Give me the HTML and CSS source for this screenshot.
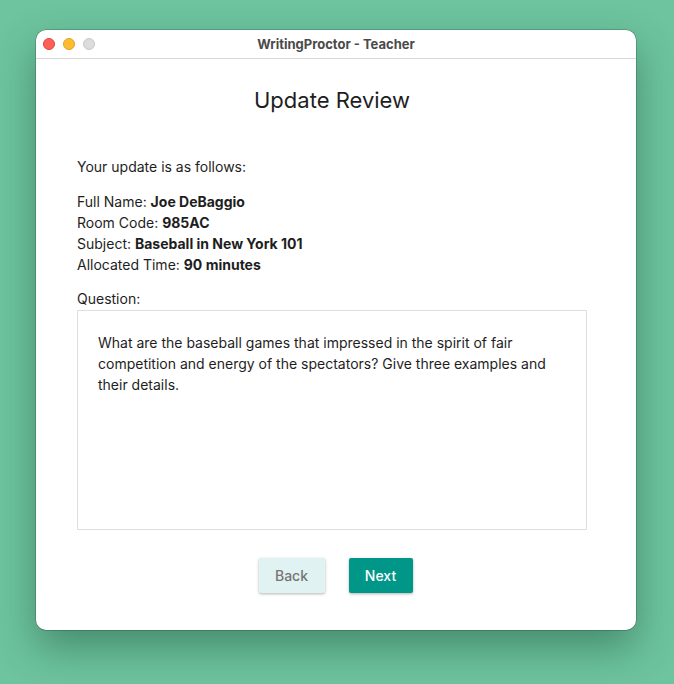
FILE: index.html
```html
<!DOCTYPE html>
<html>
<head>
<meta charset="utf-8">
<link rel="stylesheet" href="styles.css">
</head>
<body>
<div class="desktop">
  <div class="window">
    <div class="titlebar">
      <div class="lights">
        <span class="light red"></span>
        <span class="light yellow"></span>
        <span class="light gray"></span>
      </div>
      <div class="title">WritingProctor - Teacher</div>
    </div>
    <div class="content">
      <h1 class="heading">Update Review</h1>
      <p class="intro">Your update is as follows:</p>
      <div class="details">
        <div>Full Name: <b>Joe DeBaggio</b></div>
        <div>Room Code: <b>985AC</b></div>
        <div>Subject: <b>Baseball in New York 101</b></div>
        <div>Allocated Time: <b>90 minutes</b></div>
      </div>
      <div class="qlabel">Question:</div>
      <div class="qbox">What are the baseball games that impressed in the spirit of fair competition and energy of the spectators? Give three examples and their details.</div>
      <div class="actions">
        <button class="btn back">Back</button>
        <button class="btn next">Next</button>
      </div>
    </div>
  </div>
</div>
</body>
</html>
```
FILE: styles.css
```css
html, body {
  margin: 0;
  padding: 0;
}
body {
  width: 674px;
  height: 684px;
  background: #6ec49f;
  font-family: Inter, "Noto Sans", sans-serif;
  overflow: hidden;
}
.desktop {
  padding: 30px 38px 0 36px;
}
.window {
  width: 600px;
  height: 600px;
  background: #fff;
  border-radius: 10px;
  box-shadow: 0 0 0 0.5px rgba(0,0,0,0.35), 0 18px 40px rgba(20,70,50,0.45);
  overflow: hidden;
  display: flex;
  flex-direction: column;
}
.titlebar {
  height: 28px;
  border-bottom: 1px solid #d9d9d9;
  position: relative;
  display: flex;
  align-items: center;
  justify-content: center;
  flex-shrink: 0;
}
.lights {
  position: absolute;
  left: 7px;
  top: 8px;
  display: flex;
  gap: 8px;
}
.light {
  width: 12px;
  height: 12px;
  border-radius: 50%;
  box-sizing: border-box;
}
.red { background: #fe5f57; border: 0.5px solid #e0443e; }
.yellow { background: #febc2e; border: 0.5px solid #dea123; }
.gray { background: #dcdcdc; border: 0.5px solid #c8c8c8; }
.title {
  font-size: 13px;
  font-weight: 700;
  color: #4a4a4a;
  font-family: Inter, "Noto Sans", sans-serif;
}
.content {
  padding: 0 49px 0 41px;
  color: #1e1e1e;
  font-size: 14px;
  line-height: 21px;
}
.heading {
  margin: 27px 0 0;
  font-size: 22px;
  font-weight: 400;
  line-height: 28px;
  text-align: center;
  color: #1e1e1e;
}
.intro {
  margin: 42px 0 0;
}
.details {
  margin-top: 14px;
}
.details b {
  font-weight: 700;
}
.qlabel {
  margin-top: 13px;
}
.qbox {
  margin-top: 1px;
  border: 1px solid #dedede;
  padding: 21px 21px 0 20px;
  box-sizing: border-box;
  height: 220px;
}
.actions {
  display: flex;
  justify-content: center;
  gap: 24px;
  margin-top: 28px;
  padding-left: 7px;
}
.btn {
  height: 35px;
  border: none;
  border-radius: 2px;
  font-family: Inter, "Noto Sans", sans-serif;
  font-size: 14px;
  font-weight: 500;
  box-shadow: 0 1px 3px rgba(0,0,0,0.3);
  padding: 0;
}
.back {
  width: 66px;
  background: #e0f2f1;
  color: #757575;
}
.next {
  width: 64px;
  background: #009688;
  color: #fff;
}
```
